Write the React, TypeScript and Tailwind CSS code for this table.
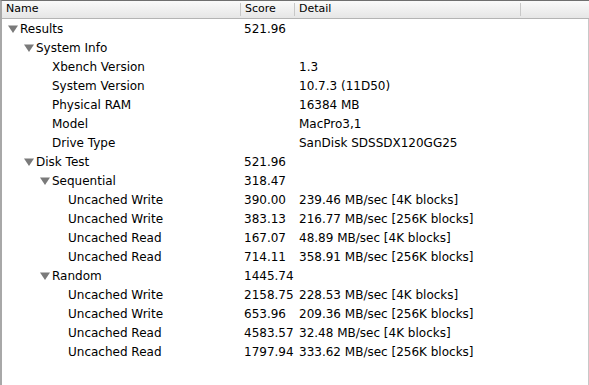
import React from "react";

type Row = {
  name: string;
  level: number;
  expandable?: boolean;
  score?: string;
  detail?: string;
};

const rows: Row[] = [
  { name: "Results", level: 0, expandable: true, score: "521.96" },
  { name: "System Info", level: 1, expandable: true },
  { name: "Xbench Version", level: 2, detail: "1.3" },
  { name: "System Version", level: 2, detail: "10.7.3 (11D50)" },
  { name: "Physical RAM", level: 2, detail: "16384 MB" },
  { name: "Model", level: 2, detail: "MacPro3,1" },
  { name: "Drive Type", level: 2, detail: "SanDisk SDSSDX120GG25" },
  { name: "Disk Test", level: 1, expandable: true, score: "521.96" },
  { name: "Sequential", level: 2, expandable: true, score: "318.47" },
  { name: "Uncached Write", level: 3, score: "390.00", detail: "239.46 MB/sec [4K blocks]" },
  { name: "Uncached Write", level: 3, score: "383.13", detail: "216.77 MB/sec [256K blocks]" },
  { name: "Uncached Read", level: 3, score: "167.07", detail: "48.89 MB/sec [4K blocks]" },
  { name: "Uncached Read", level: 3, score: "714.11", detail: "358.91 MB/sec [256K blocks]" },
  { name: "Random", level: 2, expandable: true, score: "1445.74" },
  { name: "Uncached Write", level: 3, score: "2158.75", detail: "228.53 MB/sec [4K blocks]" },
  { name: "Uncached Write", level: 3, score: "653.96", detail: "209.36 MB/sec [256K blocks]" },
  { name: "Uncached Read", level: 3, score: "4583.57", detail: "32.48 MB/sec [4K blocks]" },
  { name: "Uncached Read", level: 3, score: "1797.94", detail: "333.62 MB/sec [256K blocks]" },
];

// 16px per tree level
const indent = ["pl-[6px]", "pl-[22px]", "pl-[38px]", "pl-[54px]"];

function Disclosure() {
  return (
    <svg width="10" height="8" viewBox="0 0 10 8" className="mr-[2px] shrink-0">
      <path d="M0 0.5 H10 L5 8 Z" fill="#7a7a7a" />
    </svg>
  );
}

function HeaderCell({ label, width }: { label: string; width: string }) {
  return (
    <div className={`${width} flex h-full items-center border-r border-[#c8c8c8] pl-[4px]`}>
      {label}
    </div>
  );
}

export default function App() {
  return (
    <div
      className="flex h-[385px] w-[589px] flex-col overflow-hidden border-l-2 border-t border-l-[#a8a8a8] border-t-[#6f6f6f] bg-white text-black"
      style={{ fontFamily: '"DejaVu Sans", "Liberation Sans", sans-serif' }}
    >
      {/* column headers */}
      <div className="flex h-[18px] shrink-0 items-center border-b border-[#b4b4b4] bg-gradient-to-b from-[#fafafa] to-[#e6e6e6] py-[2px] text-[11px]">
        <HeaderCell label="Name" width="w-[239px]" />
        <HeaderCell label="Score" width="w-[54px]" />
        <HeaderCell label="Detail" width="w-[226px]" />
        <div className="flex-1" />
      </div>

      {/* rows */}
      <div className="flex flex-1 border-r border-[#c8c8c8] text-[12px]">
        <div className="flex w-full flex-col">
          {rows.map((r, i) => (
            <div key={i} className="flex h-[19px] items-center">
              <div className={`flex w-[239px] items-center ${indent[r.level]}`}>
                {r.expandable ? <Disclosure /> : <span className="w-[12px] shrink-0" />}
                <span>{r.name}</span>
              </div>
              <div className="w-[57px] pl-[3px]">{r.score ?? ""}</div>
              <div className="pl-[1px] whitespace-nowrap">{r.detail ?? ""}</div>
            </div>
          ))}
        </div>
      </div>
    </div>
  );
}
